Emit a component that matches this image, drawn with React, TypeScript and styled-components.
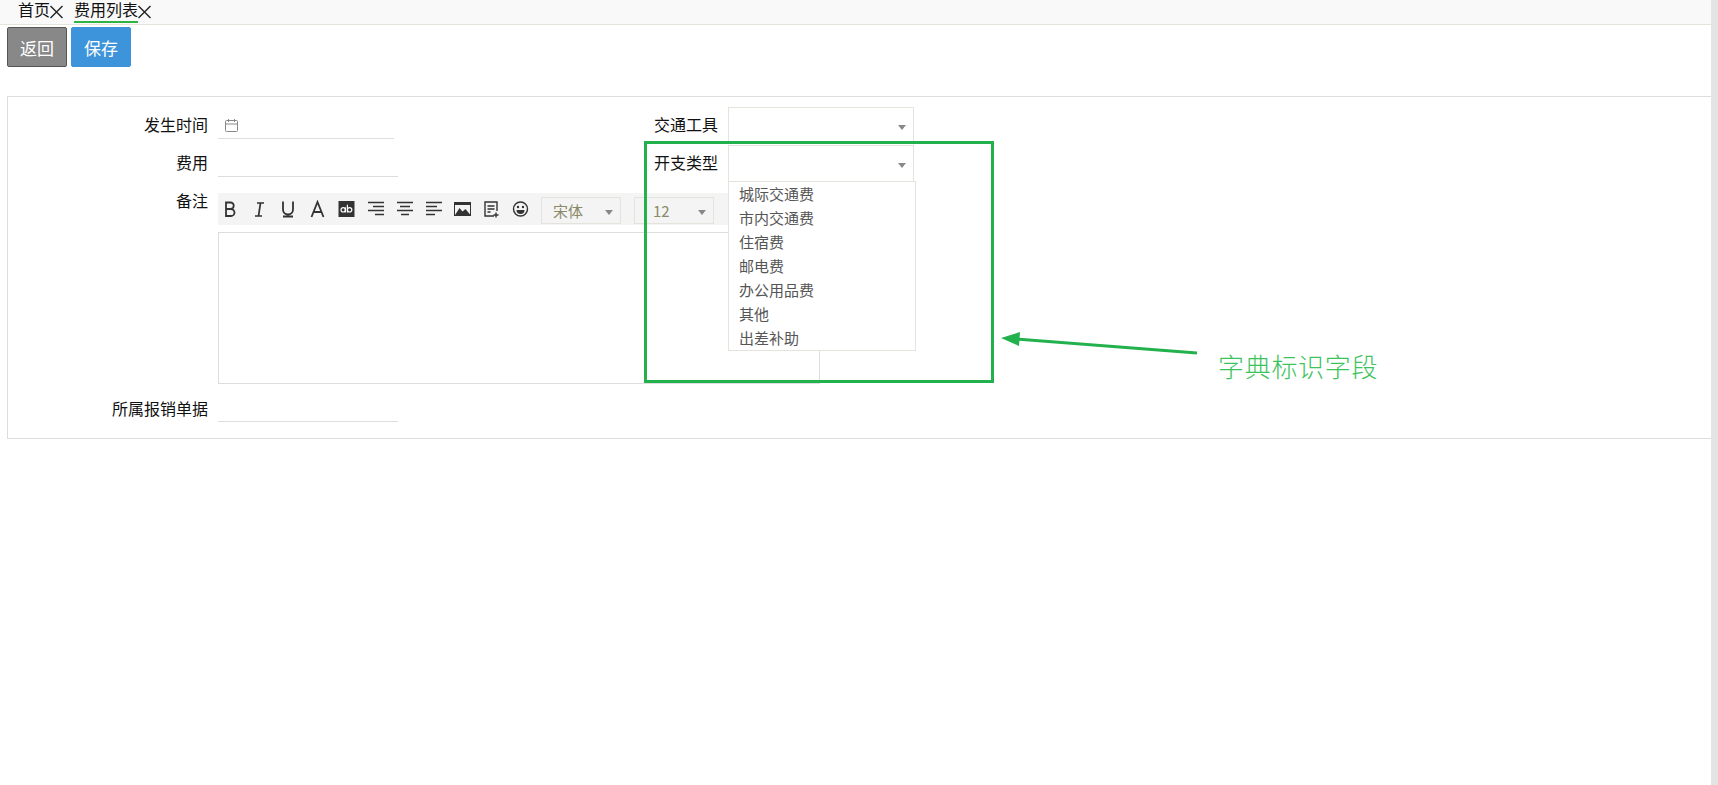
import React from "react";
import styled, { createGlobalStyle } from "styled-components";

const Global = createGlobalStyle`
  html, body { margin: 0; padding: 0; background: #fff; height: 100%; overflow: hidden; }
  body { font-family: "Noto Sans CJK SC", "Liberation Sans", sans-serif; font-size: 16px; color: #111; }
  * { box-sizing: border-box; }
`;

const Page = styled.div`
  position: relative;
  width: 1718px;
  height: 785px;
  padding-right: 7px;
  overflow: hidden;
`;
const Scrollbar = styled.div`
  position: absolute;
  right: 0;
  top: 0;
  bottom: 0;
  width: 7px;
  background: #e4e4e4;
`;
const TabBar = styled.div`
  height: 25px;
  background: #f9f9f9;
  border-bottom: 1px solid #e4e4dc;
  display: flex;
  padding-left: 18px;
`;
const Tab = styled.div`
  display: flex;
  align-items: flex-start;
  margin-right: 10px;
  font-family: "Liberation Sans", "Noto Sans CJK SC", sans-serif;
  font-size: 16px;
  line-height: 20px;
`;
const TabLabel = styled.span<{ $active?: boolean }>`
  height: 23px;
  padding-top: 1px;
  border-bottom: 2px solid ${(p) => (p.$active ? "#2fb344" : "transparent")};
`;
const TabClose = styled.svg`
  width: 14px;
  height: 14px;
  margin-top: 5px;
  stroke: #222;
  stroke-width: 1.4;
  fill: none;
`;
const Actions = styled.div`
  display: flex;
  gap: 4px;
  padding: 2px 0 0 7px;
  height: 71px;
`;
const Button = styled.button<{ $kind: "back" | "save" }>`
  width: 60px;
  height: 40px;
  border-radius: 2px;
  border: 1px solid ${(p) => (p.$kind === "back" ? "#555" : "#3d94da")};
  background: ${(p) => (p.$kind === "back" ? "#888" : "#3d94da")};
  color: #fff;
  font: 17px "Noto Sans CJK SC", sans-serif;
  padding: 0;
`;
const Panel = styled.div`
  position: relative;
  margin-left: 7px;
  height: 343px;
  border: 1px solid #ddd;
  border-right: 0;
  padding-top: 10px;
`;
const Grid = styled.div`
  display: grid;
  grid-template-columns: 573px 1fr;
`;
const Row = styled.div`
  display: flex;
  height: 38px;
`;
const LastRow = styled(Row)`
  margin-top: 6px;
`;
const Label = styled.label<{ $w: number; $top?: number }>`
  width: ${(p) => p.$w}px;
  text-align: right;
  padding: ${(p) => p.$top ?? 7}px 10px 0 0;
  font-size: 16px;
  line-height: 20px;
  flex: none;
`;
const LineField = styled.div<{ $w: number }>`
  width: ${(p) => p.$w}px;
  height: 32px;
  border-bottom: 1px solid #ddd;
  display: flex;
  align-items: center;
  padding: 5px 0 0 7px;
`;
const Select = styled.div`
  position: relative;
  width: 186px;
  height: 38px;
  border: 1px solid #e4e4dc;
  border-bottom-color: transparent;
`;
const Caret = styled.span`
  position: absolute;
  right: 7px;
  top: 50%;
  margin-top: -1px;
  border: 4px solid transparent;
  border-top: 5px solid #888;
  border-bottom: 0;
`;
const Menu = styled.ul`
  position: absolute;
  z-index: 3;
  left: 720px;
  top: 84px;
  width: 188px;
  height: 170px;
  margin: 0;
  padding: 0 0 0 10px;
  list-style: none;
  background: #fff;
  border: 1px solid #e4e4dc;
`;
const MenuItem = styled.li`
  font-size: 15px;
  line-height: 24px;
  height: 24px;
  color: #555;
`;
const EditorRow = styled.div`
  display: flex;
`;
const EditorWrap = styled.div`
  width: 602px;
  margin-top: 10px;
`;
const Toolbar = styled.div`
  height: 32px;
  background: #f4f4f4;
  display: flex;
  align-items: center;
  padding-left: 4px;
`;
const ToolIcon = styled.svg`
  width: 17px;
  height: 18px;
  margin-right: 12px;
  flex: none;
  color: #333;
`;
const ToolSelect = styled.div<{ $gap: number; $pad: number }>`
  position: relative;
  width: 80px;
  height: 27px;
  margin: 3px ${(p) => p.$gap}px 0 0;
  border: 1px solid #e4e4dc;
  font-size: 15px;
  line-height: 25px;
  padding-left: ${(p) => p.$pad}px;
  color: #8a8a6a;
  flex: none;
`;
const EditorBox = styled.div`
  height: 152px;
  margin-top: 7px;
  border: 1px solid #ddd;
`;
const Note = styled.div`
  position: absolute;
  z-index: 4;
  left: 1218px;
  top: 351px;
  font-size: 26px;
  font-weight: 300;
  line-height: 30px;
  letter-spacing: 0.7px;
  color: #3cc35c;
`;
const Highlight = styled.div`
  position: absolute;
  z-index: 4;
  left: 644px;
  top: 141px;
  width: 350px;
  height: 242px;
  border: 3px solid #22b14c;
  pointer-events: none;
`;
const Arrow = styled.svg`
  position: absolute;
  z-index: 4;
  left: 995px;
  top: 325px;
  width: 210px;
  height: 40px;
`;

const Close = () => (
  <TabClose viewBox="0 0 14 14">
    <path d="M0.5 1l12 12M12.5 1L0.5 13" />
  </TabClose>
);

const tools = [
  <path key="b" d="M4 2.5h4.5a3 3 0 010 6.5H4zM4 9h5a3.4 3.4 0 010 7H4z" fill="none" stroke="currentColor" strokeWidth="1.8" />,
  <path key="i" d="M6 3h7M4 16h7M9.5 3l-2 13" fill="none" stroke="currentColor" strokeWidth="1.7" />,
  <path key="u" d="M3 2v8a5 5 0 0010 0V2M3 17h10" fill="none" stroke="currentColor" strokeWidth="1.8" transform="translate(0 -.5)" />,
  <path key="a" d="M2.5 17L8.5 2l6 15M4.8 12h7.4" fill="none" stroke="currentColor" strokeWidth="1.8" />,
  <g key="ab">
    <rect x="0.5" y="1" width="16" height="16" fill="currentColor" />
    <circle cx="5.2" cy="9.8" r="2.2" fill="none" stroke="#fff" strokeWidth="1.2" />
    <path d="M7.4 7.2V12.4M9.4 4.8V12.4" fill="none" stroke="#fff" strokeWidth="1.2" />
    <circle cx="11.6" cy="9.8" r="2.2" fill="none" stroke="#fff" strokeWidth="1.2" />
  </g>,
  <path key="r" d="M1 2.5h16M6 6.5h11M1 10.5h16M8 14.5h9" fill="none" stroke="currentColor" strokeWidth="1.5" />,
  <path key="c" d="M1 2.5h16M4 6.5h10M1 10.5h16M5 14.5h8" fill="none" stroke="currentColor" strokeWidth="1.5" />,
  <path key="l" d="M1 2.5h16M1 6.5h11M1 10.5h16M1 14.5h9" fill="none" stroke="currentColor" strokeWidth="1.5" />,
  <g key="img">
    <rect x="0.5" y="2.5" width="16" height="13" fill="none" stroke="currentColor" />
    <path d="M1 15l4.5-7 3 3.5 3-2.5 5 6z M1 3h15.5v2H1z" fill="currentColor" />
  </g>,
  <g key="note" fill="none" stroke="currentColor" strokeWidth="1.4">
    <path d="M11 16H2V2h12v9" />
    <path d="M4.5 6h7M4.5 9h7M4.5 12h3" />
    <path d="M13 12.5v5M10.5 15h5" />
  </g>,
  <g key="smile">
    <circle cx="8.5" cy="9" r="7" fill="none" stroke="currentColor" strokeWidth="1.4" />
    <circle cx="6" cy="7" r="1.2" fill="currentColor" />
    <circle cx="11" cy="7" r="1.2" fill="currentColor" />
    <path d="M4.5 10h8a4 4 0 01-8 0z" fill="currentColor" />
  </g>,
];

const items = ["城际交通费", "市内交通费", "住宿费", "邮电费", "办公用品费", "其他", "出差补助"];

export default function App() {
  return (
    <Page>
      <Global />
      <TabBar>
        <Tab>
          <TabLabel>首页</TabLabel>
          <Close />
        </Tab>
        <Tab>
          <TabLabel $active>费用列表</TabLabel>
          <Close />
        </Tab>
      </TabBar>
      <Actions>
        <Button $kind="back">返回</Button>
        <Button $kind="save">保存</Button>
      </Actions>
      <Panel>
        <Grid>
          <Row>
            <Label $w={210}>发生时间</Label>
            <LineField $w={176}>
              <svg width="13" height="13" viewBox="0 0 13 13" fill="none" stroke="#888">
                <rect x="0.5" y="1.5" width="12" height="11" rx="1" />
                <path d="M0.5 5h12M3.5 0v3M9.5 0v3" />
              </svg>
            </LineField>
          </Row>
          <Row>
            <Label $w={147}>交通工具</Label>
            <Select><Caret /></Select>
          </Row>
          <Row>
            <Label $w={210}>费用</Label>
            <LineField $w={180} />
          </Row>
          <Row>
            <Label $w={147}>开支类型</Label>
            <Select><Caret /></Select>
          </Row>
        </Grid>
        <EditorRow>
          <Label $w={210}>备注</Label>
          <EditorWrap>
            <Toolbar>
              {tools.map((t, i) => (
                <ToolIcon key={i} viewBox="0 0 17 18">{t}</ToolIcon>
              ))}
              <ToolSelect $gap={13} $pad={11}>宋体<Caret /></ToolSelect>
              <ToolSelect $gap={0} $pad={18}>12<Caret /></ToolSelect>
            </Toolbar>
            <EditorBox />
          </EditorWrap>
        </EditorRow>
        <LastRow>
          <Label $w={210} $top={8}>所属报销单据</Label>
          <LineField $w={180} />
        </LastRow>
        <Menu>
          {items.map((t) => <MenuItem key={t}>{t}</MenuItem>)}
        </Menu>
      </Panel>
      <Highlight />
      <Arrow viewBox="0 0 210 40">
        <path d="M202 28L20 14" stroke="#22b14c" strokeWidth="3" fill="none" />
        <path d="M6 13l19-6-1 14z" fill="#22b14c" />
      </Arrow>
      <Note>字典标识字段</Note>
      <Scrollbar />
    </Page>
  );
}
